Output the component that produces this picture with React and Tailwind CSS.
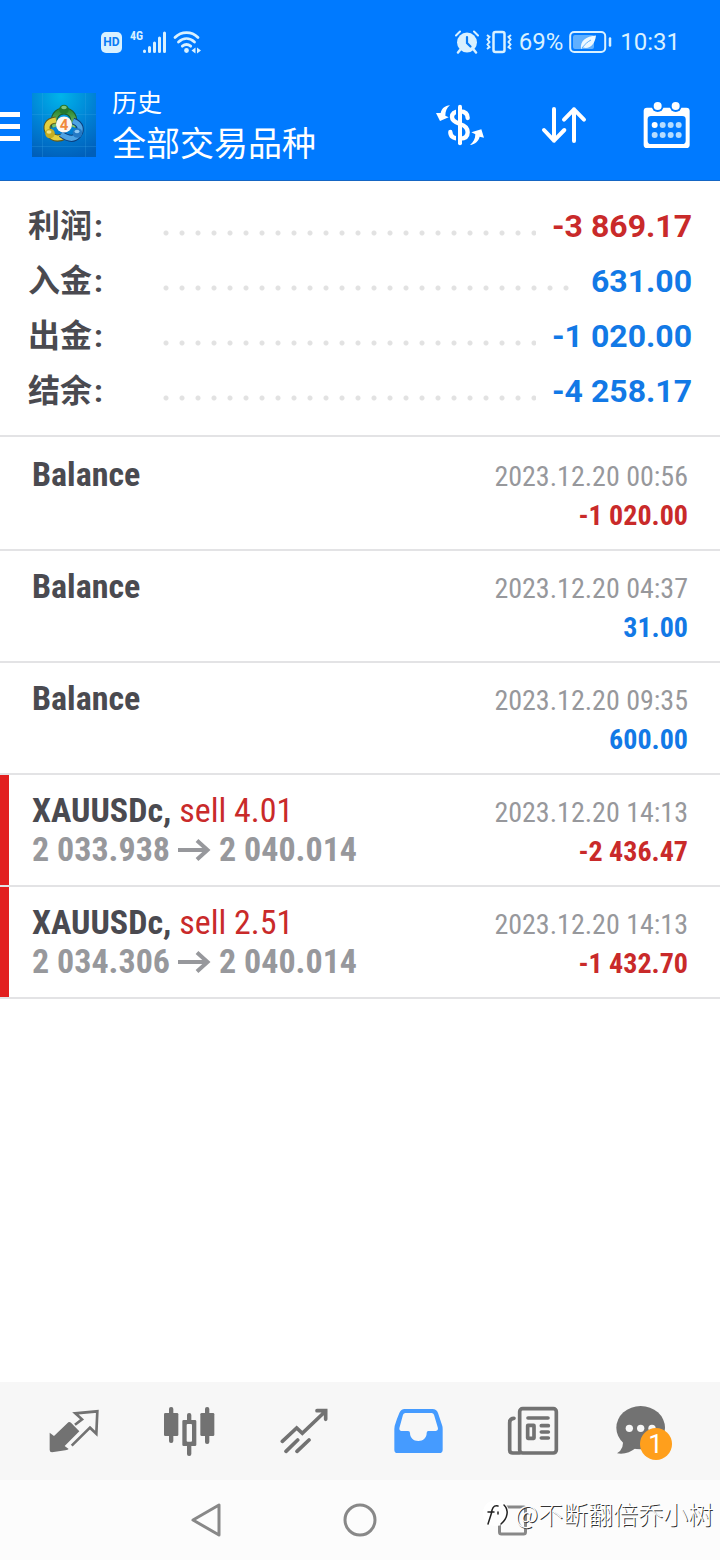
import clsx from 'clsx';

const summary = [
  { id: 'profit', label: '利润', value: '-3 869.17', negative: true },
  { id: 'deposit', label: '入金', value: '631.00' },
  { id: 'withdrawal', label: '出金', value: '-1 020.00' },
  { id: 'balance', label: '结余', value: '-4 258.17' },
];

const history = [
  { id: 'h1', name: 'Balance', time: '2023.12.20 00:56', amount: '-1 020.00' },
  { id: 'h2', name: 'Balance', time: '2023.12.20 04:37', amount: '31.00' },
  { id: 'h3', name: 'Balance', time: '2023.12.20 09:35', amount: '600.00' },
  {
    id: 'h4',
    name: 'XAUUSDc',
    order: 'sell 4.01',
    open: '2 033.938',
    close: '2 040.014',
    time: '2023.12.20 14:13',
    amount: '-2 436.47',
  },
  {
    id: 'h5',
    name: 'XAUUSDc',
    order: 'sell 2.51',
    open: '2 034.306',
    close: '2 040.014',
    time: '2023.12.20 14:13',
    amount: '-1 432.70',
  },
];

function StatusBar() {
  return (
    <div className="flex h-[84px] items-center justify-between pl-[101px] pr-10 text-[#d9f1ff]">
      <div className="flex items-center gap-1.5">
        <span className="flex h-[21px] w-[21px] items-center justify-center rounded-[5px] bg-[#d9f1ff] text-[12px] font-bold text-[#0a7cf5]">
          HD
        </span>
        <div className="flex items-start pl-0.5 font-['Roboto_Condensed',Roboto,sans-serif]">
          <span className="text-[12px] leading-3 font-bold">4G</span>
          <svg viewBox="0 0 24 24" className="h-6 w-6" stroke="currentColor" strokeWidth="3" strokeLinecap="round">
            <path d="M1.500 21V21.500M6.500 21.500V17.500M11.500 21.500V13M16.500 21.500V8M21.500 21.500V3" />
          </svg>
        </div>
        <svg viewBox="0 0 28 24" className="h-6 w-7" fill="none" stroke="currentColor" strokeWidth="2.800" strokeLinecap="round">
          <path d="M2 7.500C8.500 1 18.500 1 25 7.500M5.500 12C10.500 7.500 16.500 7.500 21.500 12M9.300 16.200C12 14 15 14 17.700 16.200" />
          <circle cx="13.500" cy="20.500" r="1" fill="currentColor" />
          <path d="M22.500 17.500V23.500L18.500 20.500ZM24 17.500V23.500L28 20.500Z" fill="currentColor" stroke="none" />
        </svg>
      </div>

      <div className="flex items-center">
        <svg viewBox="0 0 24 24" className="h-6 w-6" fill="none">
          <path d="M5 20L3 22.500M19 20L21 22.500" stroke="currentColor" strokeWidth="2.500" strokeLinecap="round" />
          <circle cx="12" cy="12.500" r="10" fill="currentColor" />
          <path d="M1 5.500L5 1.500M19 1.500L23 5.500" stroke="currentColor" strokeWidth="2" strokeLinecap="round" />
          <path d="M12 7V13L15.500 16.500" stroke="#0a7cf5" strokeWidth="2.200" strokeLinecap="round" />
        </svg>
        <svg viewBox="0 0 28 24" className="ml-1.5 h-6 w-7" fill="none" stroke="currentColor" strokeWidth="2">
          <rect x="8.500" y="2" width="11" height="20" rx="2" strokeWidth="2.500" />
          <path d="M2 5L4.500 7L2.500 9.500L4.500 12L2.500 14.500L4.500 17L2 19M26 5L23.500 7L25.500 9.500L23.500 12L25.500 14.500L23.500 17L26 19" />
        </svg>
        <span className="ml-1.5 text-[24px] leading-8">69%</span>
        <svg viewBox="0 0 43 24" className="ml-1.5 h-6 w-[43px]" fill="none">
          <rect x="1.200" y="2" width="35" height="20" rx="4" stroke="currentColor" strokeWidth="2" />
          <rect x="4" y="5" width="21" height="14" rx="2" fill="#5fb0ff" />
          <path d="M12 19C11 11 17 6 27 5.500C26 14 21 19.500 14 17.500L12 19Z" fill="#ecf8ff" />
          <path d="M13 18C16 14 19 11.500 22 10" stroke="#5fb0ff" strokeWidth="1" />
          <path d="M41 8.500V15.500" stroke="currentColor" strokeWidth="2.500" strokeLinecap="round" />
        </svg>
        <span className="ml-2 text-[24px] leading-8">10:31</span>
      </div>
    </div>
  );
}

function AppLogo() {
  return (
    <svg viewBox="0 0 64 64" className="h-16 w-16">
      <defs>
        <radialGradient id="logo-bg" cx="0.45" cy="0.05" r="1">
          <stop offset="0" stopColor="#00b4ea" />
          <stop offset="0.550" stopColor="#0080d4" />
          <stop offset="1" stopColor="#005fba" />
        </radialGradient>
        <linearGradient id="logo-green" x1="0" y1="0" x2="0" y2="1">
          <stop offset="0" stopColor="#2f8a34" />
          <stop offset="1" stopColor="#7cc576" />
        </linearGradient>
      </defs>
      <rect width="64" height="64" fill="url(#logo-bg)" />
      <path d="M0 21.500H64M0 53.500H64M10.500 0V64M53.500 0V64" stroke="#3aa9e8" strokeOpacity="0.250" />
      <path d="M23 34C20 24 25 18 32 18S44 24 41 34" fill="none" stroke="#1d5b2b" strokeWidth="7" />
      <path d="M23 34C20 24 25 18 32 18S44 24 41 34" fill="none" stroke="url(#logo-green)" strokeWidth="5" />
      <path d="M24 27C15 28 13 34 17 40S27 46 33 43" fill="none" stroke="#5f5a1c" strokeWidth="7" />
      <path d="M24 27C15 28 13 34 17 40S27 46 33 43" fill="none" stroke="#e3cf3f" strokeWidth="5" />
      <path d="M41 28C49 31 50 37 46 42S36 46 29 41" fill="none" stroke="#0c3f7d" strokeWidth="7" />
      <path d="M41 28C49 31 50 37 46 42S36 46 29 41" fill="none" stroke="#4da3e4" strokeWidth="5" />
      <circle cx="32" cy="16.500" r="4.800" fill="#23772d" />
      <ellipse cx="32" cy="14.500" rx="2.800" ry="1.800" fill="#7fc47c" />
      <circle cx="18" cy="40.500" r="4.800" fill="#c5ad22" />
      <ellipse cx="17" cy="39" rx="2.500" ry="1.800" fill="#f0e383" />
      <circle cx="45.500" cy="40" r="4.800" fill="#2479c4" />
      <ellipse cx="45" cy="38.500" rx="2.500" ry="1.800" fill="#8cc8f3" />
      <circle cx="32" cy="31.500" r="8" fill="#fbf7f2" />
      <text x="32" y="37" textAnchor="middle" fontSize="15" fontWeight="700" fill="#f08a3c">
        4
      </text>
    </svg>
  );
}

function Header() {
  return (
    <header className="flex items-center border-b border-[#1566c4] pt-1.5 pr-[30px] pb-[18px] text-white">
      <button type="button" aria-label="菜单" className="flex w-5 flex-col gap-[7px]">
        <span className="h-[5px] bg-current" />
        <span className="h-[5px] bg-current" />
        <span className="h-[5px] bg-current" />
      </button>
      <div className="mb-0.5 ml-3">
        <AppLogo />
      </div>
      <div className="ml-4 flex flex-1 flex-col gap-2">
        <p className="text-[25px] leading-7">历史</p>
        <h1 className="text-[34px] leading-9">全部交易品种</h1>
      </div>
      <div className="mb-0.5 flex items-center gap-14">
        <button type="button" aria-label="货币">
          <svg viewBox="45 57 150 126" className="h-[42px] w-[50px]" fill="none">
            <path
              d="M143 99C143 84 134 79 120 79C104 79 96 86 96 96C96 108 108 113 120 117C134 121 143 128 143 142C143 157 134 161 120 161C102 161 91 156 91 141"
              stroke="currentColor"
              strokeWidth="13"
              strokeLinecap="round"
            />
            <path d="M111 66V90M111 148V174" stroke="#007aff" strokeWidth="6" />
            <path d="M120 65V175" stroke="currentColor" strokeWidth="12" strokeLinecap="round" />
            <path
              d="M90 61C74 63 66 70 62 84L48 84L60 108L86 97L76 92C76 80 80 68 90 61ZM150 180C166 178 176 168 179 155L192 158L184 133L154 142L166 148C166 162 160 172 150 180Z"
              fill="currentColor"
            />
          </svg>
        </button>
        <button type="button" aria-label="排序">
          <svg
            viewBox="363 60 138 120"
            className="h-10 w-[46px]"
            fill="none"
            stroke="currentColor"
            strokeWidth="12"
            strokeLinecap="round"
            strokeLinejoin="round"
          >
            <path d="M402 72V167M372 135L402 167L433 135M462 168V73M432 104L462 73L492 104" />
          </svg>
        </button>
        <button type="button" aria-label="日期">
          <svg viewBox="670 45 141 144" className="h-12 w-[47px]">
            <rect x="672" y="65" width="138" height="121" rx="10" fill="currentColor" />
            <rect x="684" y="90" width="114" height="84" rx="10" fill="#007aff" />
            <circle cx="714" cy="60" r="18" fill="#007aff" />
            <circle cx="768" cy="60" r="18" fill="#007aff" />
            <circle cx="714" cy="60" r="12" fill="currentColor" />
            <circle cx="768" cy="60" r="12" fill="currentColor" />
            <circle cx="705" cy="117" r="9" fill="currentColor" />
            <g fill="#b5dcff">
              <circle cx="729" cy="117" r="9" />
              <circle cx="753" cy="117" r="9" />
              <circle cx="777" cy="117" r="9" />
              <circle cx="705" cy="147" r="9" />
              <circle cx="729" cy="147" r="9" />
              <circle cx="753" cy="147" r="9" />
              <circle cx="777" cy="147" r="9" />
            </g>
          </svg>
        </button>
      </div>
    </header>
  );
}

function Summary() {
  return (
    <dl className="border-b-2 border-[#e3e3e5] px-7 pt-[18px] pb-4 text-[32px] leading-[55px] font-bold">
      {summary.map((item) => (
        <div key={item.id} className="flex">
          <dt className="w-[130px] text-[#4a4a50]">
            {item.label}
            <span className="ml-0.5">:</span>
          </dt>
          <dd className="flex flex-1">
            <span className="mr-4 flex-1 bg-[radial-gradient(circle_at_8px_34px,#e2e2e2_2px,transparent_3px)] bg-[length:16px_55px] bg-repeat-x" />
            <span className={item.negative ? 'text-[#c92a2a]' : 'text-[#1279e6]'}>{item.value}</span>
          </dd>
        </div>
      ))}
    </dl>
  );
}

function HistoryRow({ item }) {
  return (
    <li className="flex border-b-2 border-[#e3e3e5] font-['Roboto_Condensed','Liberation_Sans_Narrow',Roboto,sans-serif]">
      <span className={clsx('w-[9px]', item.order && 'bg-[#e21f1f]')} />
      <div className="flex flex-1 justify-between pr-8 pb-[14px] pl-[23px]">
        <div className="pt-4 text-[34px] leading-[39px] font-bold text-[#4a4a50]">
          <p>
            {item.name}
            {item.order && (
              <>
                , <span className="font-normal text-[#c92a2a]">{item.order}</span>
              </>
            )}
          </p>
          {item.order && (
            <p className="flex items-center gap-2 text-[#97989c]">
              {item.open}
              <svg viewBox="0 0 33 22" className="h-[22px] w-[33px]" fill="none" stroke="currentColor" strokeWidth="4">
                <path d="M0 11H30M19 1.500L29.500 11L19 20.500" />
              </svg>
              {item.close}
            </p>
          )}
        </div>
        <div className="pt-[18px] text-right text-[28px] leading-[39px]">
          <p className="text-[#97989c]">{item.time}</p>
          <p className={clsx('font-bold', item.amount.startsWith('-') ? 'text-[#c92a2a]' : 'text-[#1279e6]')}>
            {item.amount}
          </p>
        </div>
      </div>
    </li>
  );
}

function TabBar() {
  return (
    <nav className="grid h-[98px] grid-cols-6 bg-[#f7f7f7] pr-[15px] pl-[17px] text-[#727272]">
      <button type="button" aria-label="行情" className="flex items-center justify-center">
        <svg viewBox="55 57 150 132" className="h-11 w-[50px]" fill="none">
          <path
            d="M57 128L70 138L113 97Q117 95 121 98L146 124L102 168L114 177Q112 180 104 181L64 187Q57 187 57 180Z"
            fill="currentColor"
          />
          <path d="M136 102L154 88L134 70L200 64L197 131L178 113L126 164" stroke="currentColor" strokeWidth="8" strokeLinecap="square" />
        </svg>
      </button>
      <button type="button" aria-label="图表" className="flex items-center justify-center">
        <svg viewBox="397 45 156 153" className="h-[51px] w-[52px]" fill="currentColor">
          <rect x="400" y="66" width="43" height="69" rx="4" />
          <rect x="415" y="48" width="13" height="108" rx="6" />
          <path
            fillRule="evenodd"
            d="M459 87H493Q497 87 497 91V161Q497 165 493 165H459Q455 165 455 161V91Q455 87 459 87ZM471 99Q468 99 468 102V149Q468 152 471 152H481Q484 152 484 149V102Q484 99 481 99Z"
          />
          <rect x="469" y="66" width="13" height="30" rx="6" />
          <rect x="469" y="156" width="13" height="39" rx="6" />
          <rect x="509" y="66" width="42" height="69" rx="4" />
          <rect x="523" y="48" width="13" height="111" rx="6" />
        </svg>
      </button>
      <button type="button" aria-label="交易" className="flex items-center justify-center">
        <svg viewBox="747 51 144 138" className="h-[46px] w-12" fill="none" stroke="currentColor" strokeWidth="11" strokeLinecap="round">
          <path d="M754 151L797 111L814 127L884 60M858 59H884V85M765 181L800 147M798 181L834 147" />
        </svg>
      </button>
      <button type="button" aria-label="历史" aria-current="page" className="flex items-center justify-center text-[#459bff]">
        <svg viewBox="72 51 147 138" className="h-[46px] w-[49px]" fill="currentColor">
          <path
            fillRule="evenodd"
            d="M104 54H187Q200 54 204 66L217 105Q218 108 218 114V176Q218 186 208 186H82Q73 186 73 176V114L74 105Q80 84 88 66Q93 54 104 54ZM106 66Q101 66 99 71L88 112Q87 119 93 120H114Q120 120 120 126C120 140 130 150 145 150C160 150 170 140 170 126Q170 120 175 120H198Q205 119 204 112L192 71Q190 66 185 66Z"
          />
        </svg>
      </button>
      <button type="button" aria-label="新闻" className="flex items-center justify-center">
        <svg viewBox="413 45 156 150" className="h-[50px] w-[52px]" fill="none" stroke="currentColor" strokeWidth="11" strokeLinecap="round">
          <rect x="451" y="53" width="110" height="133" rx="9" />
          <path d="M434 82Q421 82 421 96V178Q421 186 430 186H451M476 81H536M516 104H537M516 123H537M516 141H537" />
          <rect x="475" y="103" width="19" height="39" rx="1" />
        </svg>
      </button>
      <button type="button" aria-label="消息" className="flex items-center justify-center">
        <span className="relative h-[52px] w-16">
          <svg viewBox="733 45 150 150" className="h-[50px] w-[50px]">
            <ellipse cx="807" cy="113" rx="73" ry="65" fill="currentColor" />
            <path d="M752 145Q760 176 736 190Q768 195 792 174Z" fill="currentColor" />
            <g fill="#f7f7f7">
              <circle cx="773" cy="115" r="11" />
              <circle cx="807" cy="115" r="11" />
              <circle cx="841" cy="115" r="11" />
            </g>
          </svg>
          <span className="absolute top-[23px] left-6 flex h-8 w-8 items-center justify-center rounded-full bg-[#ff9f1c] text-[26px] leading-8 text-white">
            1
          </span>
        </span>
      </button>
    </nav>
  );
}

function SystemNav() {
  return (
    <nav className="relative flex h-20 items-center justify-around bg-[#fcfcfc] px-32 text-[#888888]">
      <button type="button" aria-label="返回">
        <svg viewBox="0 0 34 34" className="h-[34px] w-[34px]" fill="none" stroke="currentColor" strokeWidth="3" strokeLinejoin="round">
          <path d="M31 2V32L5 17Z" />
        </svg>
      </button>
      <button type="button" aria-label="主页">
        <svg viewBox="0 0 34 34" className="h-[34px] w-[34px]" fill="none" stroke="currentColor" strokeWidth="3">
          <circle cx="17" cy="17" r="15" />
        </svg>
      </button>
      <button type="button" aria-label="最近任务">
        <svg viewBox="0 0 34 34" className="h-[34px] w-[34px]" fill="none" stroke="currentColor" strokeWidth="3">
          <rect x="1.500" y="4" width="26" height="27" rx="2" />
        </svg>
      </button>
      <div className="absolute top-[15px] right-[7px] flex items-center text-white">
        <svg viewBox="0 0 32 28" className="h-7 w-8" fill="none" strokeLinecap="round">
          <circle cx="13" cy="14" r="13" fill="#ffffff" />
          <path d="M15 7C10 6 9 10 8.500 14L5 25M5 13H11M15 13V15" stroke="#222222" strokeWidth="1.500" />
          <path d="M21 6C26 11 25 19 18 25" stroke="#222222" strokeWidth="1.500" />
        </svg>
        <span className="font-['Noto_Sans_CJK_SC',sans-serif] text-[25px] leading-9 font-light [text-shadow:1px_1px_0_#333333]">
          @不断翻倍乔小树
        </span>
      </div>
    </nav>
  );
}

export default function App() {
  return (
    <div className="flex min-h-screen flex-col bg-white font-[Roboto,'Noto_Sans_CJK_SC',sans-serif]">
      <div className="bg-[#007aff]">
        <StatusBar />
        <Header />
      </div>
      <main className="flex-1">
        <Summary />
        <ul className="pt-0.5">
          {history.map((item) => (
            <HistoryRow key={item.id} item={item} />
          ))}
        </ul>
      </main>
      <TabBar />
      <SystemNav />
    </div>
  );
}
